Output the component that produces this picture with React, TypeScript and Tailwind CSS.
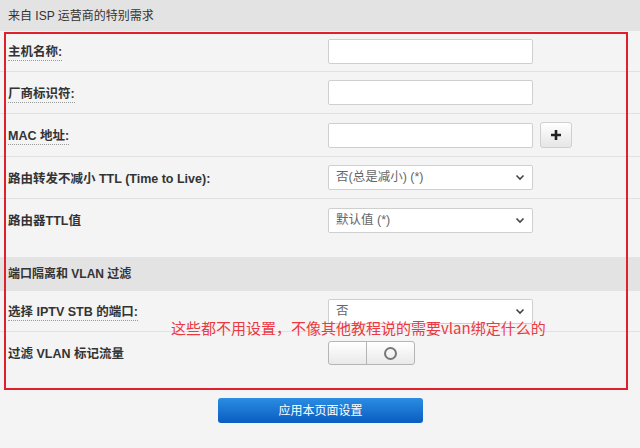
import React from "react";

const font = { fontFamily: '"Liberation Sans", Arial, "Noto Sans CJK SC", sans-serif' };

function Label({ text, dotted }: { text: string; dotted?: boolean }) {
  return (
    <span
      className={
        "text-[12.5px] font-bold text-[#333] " +
        (dotted ? "border-b border-dotted border-[#9a9a9a] pb-[1px]" : "")
      }
    >
      {text}
    </span>
  );
}

function Row({
  label,
  dotted,
  h,
  border = true,
  children,
}: {
  label: string;
  dotted?: boolean;
  h: string;
  border?: boolean;
  children?: React.ReactNode;
}) {
  return (
    <div
      className={
        "flex items-center pl-2 " +
        h +
        (border ? " border-b border-[#e1e1e1]" : "")
      }
    >
      <div className="w-[320px]">
        <Label text={label} dotted={dotted} />
      </div>
      <div className="flex items-center gap-[7px]">{children}</div>
    </div>
  );
}

function TextInput() {
  return <div className="w-[205px] h-[25px] bg-white border border-[#cfcfcf] rounded-[2px]" />;
}

function Select({ value }: { value: string }) {
  return (
    <div className="w-[205px] h-[25px] bg-white border border-[#cfcfcf] rounded-[2px] flex items-center justify-between pl-[7px] pr-[7px]">
      <span className="text-[12.5px] text-[#666]">{value}</span>
      <svg width="10" height="7" viewBox="0 0 10 7">
        <path d="M1.5 1.5 L5 5 L8.5 1.5" fill="none" stroke="#444" strokeWidth="1.6" />
      </svg>
    </div>
  );
}

export default function App() {
  return (
    <div className="relative w-[640px] h-[448px] overflow-hidden bg-[#f4f4f4]" style={font}>
      <div className="h-[31px] bg-[#e3e3e3] flex items-center pl-2 text-[12px] text-[#333]">
        来自 ISP 运营商的特别需求
      </div>

      <Row label="主机名称:" dotted h="h-[41px]">
        <TextInput />
      </Row>
      <Row label="厂商标识符:" dotted h="h-[42px]">
        <TextInput />
      </Row>
      <Row label="MAC 地址:" dotted h="h-[43px]">
        <TextInput />
        <div className="w-[32px] h-[26px] rounded-[3px] border border-[#cfcfcf] bg-gradient-to-b from-white to-[#e6e6e6] flex items-center justify-center">
          <svg width="12" height="12" viewBox="0 0 12 12">
            <path d="M6 1 V11 M1 6 H11" stroke="#222" strokeWidth="2.6" />
          </svg>
        </div>
      </Row>
      <Row label="路由转发不减小 TTL (Time to Live):" h="h-[42px]">
        <Select value="否(总是减小) (*)" />
      </Row>
      <Row label="路由器TTL值" h="h-[42px]" border={false}>
        <Select value="默认值 (*)" />
      </Row>

      <div className="mt-[16px] h-[34px] bg-[#e3e3e3] flex items-center pl-2 text-[12px] font-bold text-[#333]">
        端口隔离和 VLAN 过滤
      </div>

      <Row label="选择 IPTV STB 的端口:" dotted h="h-[41px]">
        <Select value="否" />
      </Row>
      <Row label="过滤 VLAN 标记流量" h="h-[42px]" border={false}>
        <div className="w-[87px] h-[24px] rounded-[3px] border border-[#b5b5b5] bg-gradient-to-b from-white to-[#e9e9e9] flex">
          <div className="w-[38px] h-full border-r border-[#b5b5b5]" />
          <div className="flex-1 flex items-center justify-center">
            <div className="w-[13px] h-[13px] rounded-full border-2 border-[#777]" />
          </div>
        </div>
      </Row>

      <div className="flex justify-center pt-[24px] pl-[1px]">
        <button className="w-[205px] h-[25px] rounded-[3px] bg-gradient-to-b from-[#2b8de3] to-[#0a5cc0] text-white text-[12px]">
          应用本页面设置
        </button>
      </div>

      <div className="absolute left-[4px] top-[32px] w-[624px] h-[358px] border-2 border-[#e0202a] pointer-events-none" />
      <div
        className="absolute left-[171px] top-[318px] text-[15px] leading-[20px] text-[#ea3a44] whitespace-nowrap"
        style={{ fontFamily: '"Noto Sans CJK SC", "Liberation Sans", sans-serif' }}
      >
        这些都不用设置，不像其他教程说的需要vlan绑定什么的
      </div>
    </div>
  );
}
